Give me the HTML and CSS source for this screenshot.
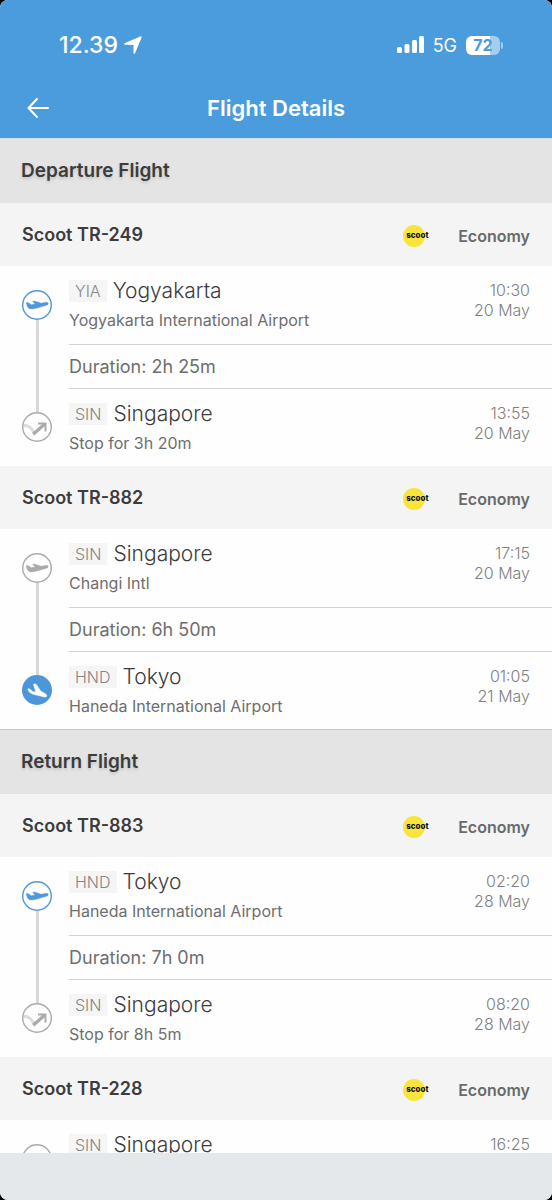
FILE: index.html
```
<!DOCTYPE html>
<html lang="en">
<head>
<meta charset="utf-8">
<meta name="viewport" content="width=device-width, initial-scale=1">
<title>Flight Details</title>
<link rel="stylesheet" href="styles.css">
</head>
<body>
<svg class="sprite" aria-hidden="true">
  <symbol id="takeoff" viewBox="0 0 30 30">
    <circle class="ring" cx="15" cy="15" r="14.300"/>
    <path d="M4.300 13.300 Q4 12.400 5 12.500 L6.200 12.800 L9.300 14.700 L13.300 14.100 L10.700 11.600 Q11.600 10.700 13 11.200 L19 13.300 L23.500 12.400 Q25.900 12.200 26.200 13.400 Q26.300 14.800 24.300 15.300 L14 18.200 Q9.500 19.400 7 18.600 Q5.300 17.500 4.300 13.300Z" fill="currentColor" stroke="currentColor" stroke-width=".5" stroke-linejoin="round"/>
  </symbol>
  <symbol id="landing" viewBox="0 0 30 30">
    <path d="M5.700 14.300 Q5.900 13.500 7 13.800 L8.500 14.600 L10.900 16.700 L13.900 16.900 L11.500 9.500 Q12.500 8.300 14 9.200 L18.800 16.200 L23 18.400 Q25.300 19.900 24.700 21.200 Q23.800 22.500 21.500 21.700 L11.300 19.300 Q6.700 17.700 5.700 14.300Z" fill="currentColor" stroke="currentColor" stroke-width=".6" stroke-linejoin="round"/>
  </symbol>
  <symbol id="transit" viewBox="0 0 30 30">
    <path d="M1.500 13.300 Q8.500 13.300 11.800 20.500" fill="none" stroke="#dcdcdc" stroke-width="3"/>
    <path d="M11.200 22.300 L22.800 12" fill="none" stroke="currentColor" stroke-width="3.300"/>
    <path d="M16 11.500 H23.500 V19.500" fill="none" stroke="currentColor" stroke-width="2"/>
    <circle class="ring" cx="15" cy="15" r="14.300"/>
  </symbol>
</svg>
<div class="app">
  <header class="top">
    <div class="status">
      <span class="clock">12.39</span>
      <svg class="locate" viewBox="0 0 18 18" aria-hidden="true"><path d="M1 8 17 1 10.300 17V8.300Z" fill="currentColor" stroke="currentColor" stroke-width="1.600" stroke-linejoin="round"/></svg>
      <svg class="signal" viewBox="0 0 28 18" aria-hidden="true"><g fill="currentColor"><rect x="0" y="11" width="5" height="6" rx="1.500"/><rect x="7.500" y="8" width="5" height="9" rx="1.500"/><rect x="15" y="4" width="5" height="13" rx="1.500"/><rect x="22" y="0" width="5" height="17" rx="1.500"/></g></svg>
      <span class="network">5G</span>
      <span class="battery">72</span>
    </div>
    <div class="bar">
      <button class="back" type="button" aria-label="Back"><svg viewBox="0 0 22 20" aria-hidden="true"><path d="M21 10H1.500M10 1 1.500 10 10 19" fill="none" stroke="currentColor" stroke-width="2" stroke-linecap="round" stroke-linejoin="round"/></svg></button>
      <h1 class="title">Flight Details</h1>
    </div>
  </header>

  <main class="content">
    <section class="trip">
      <h2 class="trip-title">Departure Flight</h2>
      <div class="flight-head"><h3 class="flight-name">Scoot TR-249</h3><span class="logo">scoot</span><span class="cabin">Economy</span></div>
      <div class="flight">
        <div class="rail">
          <svg class="node blue"><use href="#takeoff"/></svg><span class="track"></span><svg class="node"><use href="#transit"/></svg>
        </div>
        <div class="legs">
          <div class="leg"><div class="place"><div class="city"><span class="code">YIA</span>Yogyakarta</div><div class="airport">Yogyakarta International Airport</div></div><div class="when">10:30<br>20 May</div></div>
          <div class="duration">Duration: 2h 25m</div>
          <div class="leg"><div class="place"><div class="city"><span class="code">SIN</span>Singapore</div><div class="airport">Stop for 3h 20m</div></div><div class="when">13:55<br>20 May</div></div>
        </div>
      </div>
      <div class="flight-head"><h3 class="flight-name">Scoot TR-882</h3><span class="logo">scoot</span><span class="cabin">Economy</span></div>
      <div class="flight">
        <div class="rail">
          <svg class="node"><use href="#takeoff"/></svg><span class="track"></span><svg class="node filled"><use href="#landing"/></svg>
        </div>
        <div class="legs">
          <div class="leg"><div class="place"><div class="city"><span class="code">SIN</span>Singapore</div><div class="airport">Changi Intl</div></div><div class="when">17:15<br>20 May</div></div>
          <div class="duration">Duration: 6h 50m</div>
          <div class="leg"><div class="place"><div class="city"><span class="code">HND</span>Tokyo</div><div class="airport">Haneda International Airport</div></div><div class="when">01:05<br>21 May</div></div>
        </div>
      </div>
    </section>

    <section class="trip">
      <h2 class="trip-title">Return Flight</h2>
      <div class="flight-head"><h3 class="flight-name">Scoot TR-883</h3><span class="logo">scoot</span><span class="cabin">Economy</span></div>
      <div class="flight">
        <div class="rail">
          <svg class="node blue"><use href="#takeoff"/></svg><span class="track"></span><svg class="node"><use href="#transit"/></svg>
        </div>
        <div class="legs">
          <div class="leg"><div class="place"><div class="city"><span class="code">HND</span>Tokyo</div><div class="airport">Haneda International Airport</div></div><div class="when">02:20<br>28 May</div></div>
          <div class="duration">Duration: 7h 0m</div>
          <div class="leg"><div class="place"><div class="city"><span class="code">SIN</span>Singapore</div><div class="airport">Stop for 8h 5m</div></div><div class="when">08:20<br>28 May</div></div>
        </div>
      </div>
      <div class="flight-head"><h3 class="flight-name">Scoot TR-228</h3><span class="logo">scoot</span><span class="cabin">Economy</span></div>
      <div class="flight">
        <div class="rail"><svg class="node"><use href="#takeoff"/></svg></div>
        <div class="legs">
          <div class="leg"><div class="place"><div class="city"><span class="code">SIN</span>Singapore</div></div><div class="when">16:25</div></div>
        </div>
      </div>
    </section>
  </main>
  <footer class="bottom"></footer>
</div>
</body>
</html>
```
FILE: styles.css
```
* {
  box-sizing: border-box;
}

body {
  margin: 0;
  background: #000;
  color: #3c3c3c;
  font-family: Inter, "Liberation Sans", sans-serif;
}

h1, h2, h3 {
  margin: 0;
}

.sprite {
  display: none;
}

.app {
  display: flex;
  flex-direction: column;
  height: 100vh;
  overflow: hidden;
  border-radius: 8px;
  background: #fefefe;
}

/* Header */
.top {
  flex: none;
  background: #4b9cdc;
  border-bottom: 1px solid #d5dfe7;
  color: #fff;
}

.status {
  display: flex;
  align-items: center;
  height: 78px;
  padding: 12px 52px 0 59px;
}

.clock {
  font-size: 23px;
  font-weight: 500;
}

.locate {
  width: 18px;
  height: 18px;
  margin-left: 6px;
}

.signal {
  width: 28px;
  height: 18px;
  margin-left: auto;
}

.network {
  margin: 0 9px 0 8px;
  font-size: 18px;
}

.battery {
  position: relative;
  width: 34px;
  border-radius: 6px;
  background: linear-gradient(90deg, #fff 72%, #a5cdee 72%);
  color: #4b9cdc;
  font-size: 16px;
  font-weight: 700;
  line-height: 19px;
  text-align: center;
}

.battery::after {
  content: "";
  position: absolute;
  top: 6px;
  left: 35px;
  width: 2px;
  height: 7px;
  border-radius: 0 2px 2px 0;
  background: #a5cdee;
}

.bar {
  display: grid;
  grid-template-columns: 1fr auto 1fr;
  align-items: center;
  height: 60px;
  padding: 0 22px;
}

.back {
  justify-self: start;
  display: flex;
  padding: 5px;
  border: 0;
  background: none;
  color: inherit;
}

.back svg {
  width: 22px;
  height: 20px;
}

.title {
  font-size: 22px;
  font-weight: 600;
}

/* Trips */
.content {
  flex: 1;
  min-height: 0;
  overflow-y: auto;
  scrollbar-width: none;
}

.trip {
  border-bottom: 1px solid #c4c4c4;
}

.trip-title {
  padding: 0 21px;
  background: #e4e4e4;
  font-size: 19px;
  font-weight: 600;
  line-height: 64px;
  text-shadow: 0 2px 3px #c4c4c4;
}

.flight-head {
  display: flex;
  align-items: center;
  height: 63px;
  padding: 0 22px;
  background: #f4f4f4;
}

.flight-name {
  flex: 1;
  font-size: 18px;
  font-weight: 600;
}

.logo {
  width: 22px;
  height: 22px;
  margin: 3px 33px 0 0;
  padding-left: 3px;
  border-radius: 50%;
  background: #f8e43d;
  color: #111;
  font-size: 8px;
  font-weight: 800;
  line-height: 20px;
}

.cabin {
  padding-top: 2px;
  color: #6a6a6a;
  font-size: 16px;
  font-weight: 600;
}

.flight {
  display: flex;
}

.rail {
  display: flex;
  flex-direction: column;
  align-items: center;
  width: 69px;
  padding: 24px 17px 24px 22px;
}

.node {
  flex: none;
  align-self: flex-start;
  width: 30px;
  height: 30px;
  color: #aaa;
}

.ring {
  fill: none;
  stroke: currentColor;
  stroke-width: 1.4;
}

.node.blue {
  color: #4f97da;
}

.node.filled {
  border-radius: 50%;
  background: #4b97da;
  color: #fff;
}

.track {
  flex: 1;
  width: 3px;
  background: #d8d8d8;
}

.legs {
  flex: 1;
}

.leg {
  display: flex;
  justify-content: space-between;
  padding: 13px 22px 13px 0;
}

.leg:last-child {
  padding-bottom: 12px;
}

.city {
  display: flex;
  align-items: center;
  font-size: 21px;
  font-weight: 300;
  line-height: 24px;
}

.code {
  margin-right: 6px;
  padding: 0 6px;
  background: #f5f5f5;
  color: #858585;
  font-size: 16px;
  line-height: 22px;
}

.airport {
  padding-top: 6px;
  color: #6e6e6e;
  font-size: 16px;
  line-height: 22px;
}

.duration {
  border: solid #d4d4d4;
  border-width: 1px 0;
  color: #6e6e6e;
  font-size: 18px;
  line-height: 43px;
}

.when {
  padding-top: 1px;
  color: #808080;
  font-size: 16px;
  font-weight: 300;
  line-height: 20px;
  text-align: right;
}

.bottom {
  flex: none;
  height: 47px;
  background: #e4e8eb;
}
```
